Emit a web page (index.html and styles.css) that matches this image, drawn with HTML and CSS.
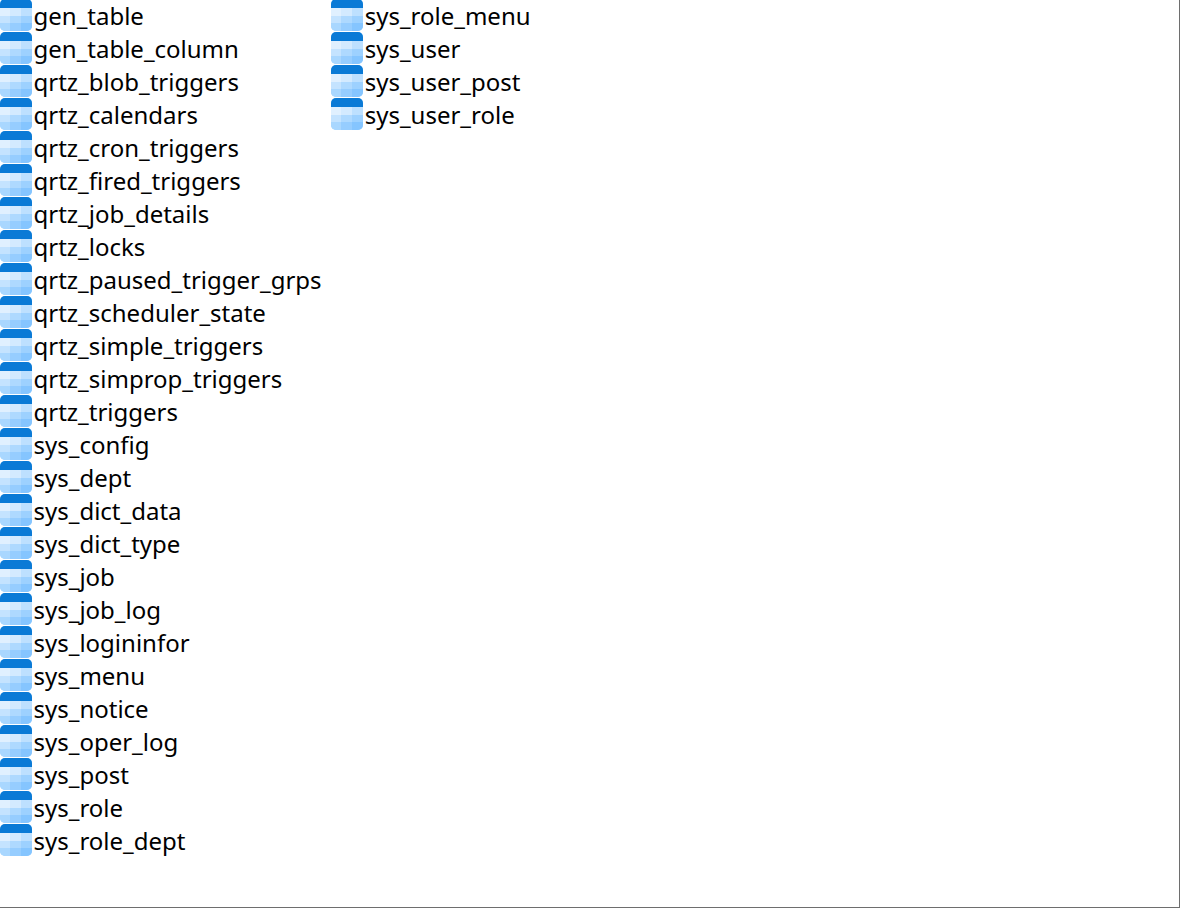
FILE: index.html
```html
<!DOCTYPE html>
<html lang="en">
<head>
    <meta charset="UTF-8">
    <meta name="viewport" content="width=device-width, initial-scale=1.0">
    <title>Tables</title>
    <link rel="stylesheet" href="styles.css">
</head>
<body>
    <svg class="sprite" width="0" height="0">
        <symbol id="table-icon" viewBox="0 0 32 32">
            <clipPath id="icon-round"><rect width="32" height="32" rx="5"/></clipPath>
            <g clip-path="url(#icon-round)">
                <rect width="32" height="32" fill="#a6d5ff"/>
                <rect x="0" y="9" width="10" height="8" fill="#e0f0ff"/>
                <rect x="10" y="9" width="11" height="8" fill="#d3eaff"/>
                <rect x="21" y="9" width="11" height="8" fill="#bde0ff"/>
                <rect x="0" y="17" width="10" height="7" fill="#c4e3ff"/>
                <rect x="10" y="17" width="11" height="7" fill="#aed9ff"/>
                <rect x="21" y="17" width="11" height="7" fill="#9dd1ff"/>
                <rect x="0" y="24" width="10" height="8" fill="#a9d7ff"/>
                <rect x="10" y="24" width="11" height="8" fill="#96cdff"/>
                <rect x="21" y="24" width="11" height="8" fill="#85c5ff"/>
                <rect x="0" y="0" width="32" height="9" fill="#0a7ad6"/>
            </g>
        </symbol>
    </svg>
    <ul class="table-list" id="tables">
        <li><svg class="icon"><use href="#table-icon"/></svg>gen_table</li>
        <li><svg class="icon"><use href="#table-icon"/></svg>gen_table_column</li>
        <li><svg class="icon"><use href="#table-icon"/></svg>qrtz_blob_triggers</li>
        <li><svg class="icon"><use href="#table-icon"/></svg>qrtz_calendars</li>
        <li><svg class="icon"><use href="#table-icon"/></svg>qrtz_cron_triggers</li>
        <li><svg class="icon"><use href="#table-icon"/></svg>qrtz_fired_triggers</li>
        <li><svg class="icon"><use href="#table-icon"/></svg>qrtz_job_details</li>
        <li><svg class="icon"><use href="#table-icon"/></svg>qrtz_locks</li>
        <li><svg class="icon"><use href="#table-icon"/></svg>qrtz_paused_trigger_grps</li>
        <li><svg class="icon"><use href="#table-icon"/></svg>qrtz_scheduler_state</li>
        <li><svg class="icon"><use href="#table-icon"/></svg>qrtz_simple_triggers</li>
        <li><svg class="icon"><use href="#table-icon"/></svg>qrtz_simprop_triggers</li>
        <li><svg class="icon"><use href="#table-icon"/></svg>qrtz_triggers</li>
        <li><svg class="icon"><use href="#table-icon"/></svg>sys_config</li>
        <li><svg class="icon"><use href="#table-icon"/></svg>sys_dept</li>
        <li><svg class="icon"><use href="#table-icon"/></svg>sys_dict_data</li>
        <li><svg class="icon"><use href="#table-icon"/></svg>sys_dict_type</li>
        <li><svg class="icon"><use href="#table-icon"/></svg>sys_job</li>
        <li><svg class="icon"><use href="#table-icon"/></svg>sys_job_log</li>
        <li><svg class="icon"><use href="#table-icon"/></svg>sys_logininfor</li>
        <li><svg class="icon"><use href="#table-icon"/></svg>sys_menu</li>
        <li><svg class="icon"><use href="#table-icon"/></svg>sys_notice</li>
        <li><svg class="icon"><use href="#table-icon"/></svg>sys_oper_log</li>
        <li><svg class="icon"><use href="#table-icon"/></svg>sys_post</li>
        <li><svg class="icon"><use href="#table-icon"/></svg>sys_role</li>
        <li><svg class="icon"><use href="#table-icon"/></svg>sys_role_dept</li>
        <li><svg class="icon"><use href="#table-icon"/></svg>sys_role_menu</li>
        <li><svg class="icon"><use href="#table-icon"/></svg>sys_user</li>
        <li><svg class="icon"><use href="#table-icon"/></svg>sys_user_post</li>
        <li><svg class="icon"><use href="#table-icon"/></svg>sys_user_role</li>
    </ul>
</body>
</html>
```

FILE: styles.css
```css
html, body {
    margin: 0;
    height: 100%;
}
body {
    box-sizing: border-box;
    background-color: #fff;
    border-right: 1px solid #6e6e6e;
    border-bottom: 1px solid #6e6e6e;
    overflow: hidden;
    font-family: "Noto Sans", sans-serif;
    font-size: 24px;
    color: #000;
}
.sprite {
    display: block;
}
.table-list {
    list-style: none;
    margin: -1px 0 0;
    padding: 0;
    display: grid;
    grid-auto-flow: column;
    grid-template-rows: repeat(26, 33px);
    grid-auto-columns: max-content;
    column-gap: 9.6px;
}
.table-list li {
    display: flex;
    align-items: center;
    gap: 1.5px;
    height: 33px;
    line-height: 33px;
    white-space: nowrap;
}
.icon {
    width: 32px;
    height: 32px;
    flex: none;
    align-self: flex-start;
}
```
